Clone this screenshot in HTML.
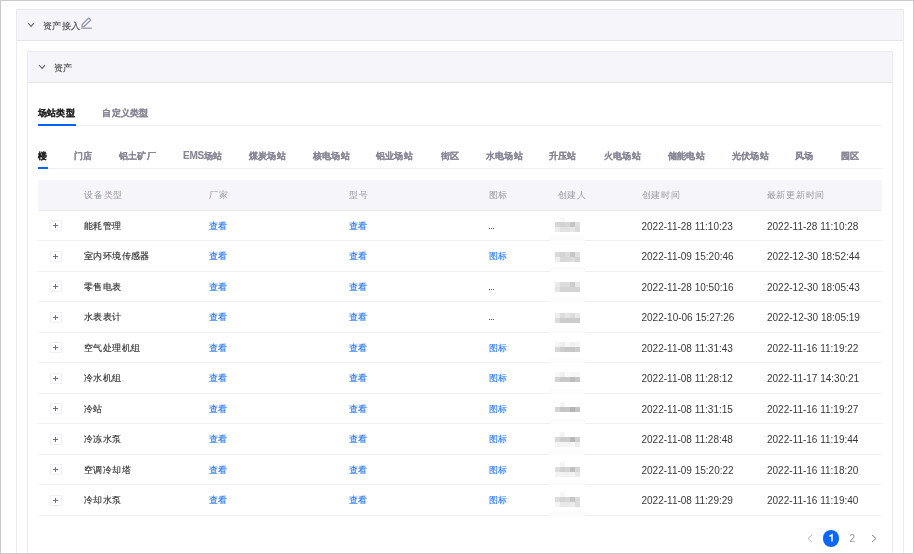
<!DOCTYPE html><html><head><meta charset='utf-8'><style>
*{box-sizing:border-box;margin:0;padding:0}
html,body{width:914px;height:554px;overflow:hidden;background:#fff}
#root{position:absolute;left:0;top:0;width:914px;height:554px;will-change:transform;font-family:"Liberation Sans",sans-serif;font-size:9px;letter-spacing:0.4px;color:#333}
.dt{-webkit-text-stroke:0.15px #333}
.a{position:absolute;white-space:nowrap;line-height:1}
.num{font-size:10px;letter-spacing:0}
.dtm{font-size:10px;letter-spacing:0;color:#383838}
.frame{position:absolute;left:0;top:0;width:914px;height:554px;border:1px solid #cac9cb}
.tt{color:#484848;-webkit-text-stroke:0.1px currentColor}
.tab{font-weight:bold;color:#868696;letter-spacing:0.2px;-webkit-text-stroke:0.1px currentColor}
.link{color:#2274f2;-webkit-text-stroke:0.08px currentColor}
.hd{color:#9a9aa4;letter-spacing:0.75px}
.ln{position:absolute;height:1px}
</style></head><body><div id="root"><div class="a" style="left:16px;top:9px;width:888px;height:560px;border:1px solid #eaeaf0"></div>
<div class="a" style="left:17px;top:10px;width:886px;height:31px;background:#f5f5fa;border-bottom:1px solid #e4e4ec"></div>
<svg class="a" style="left:27px;top:21px" width="9" height="7" viewBox="0 0 9 7"><path d="M1.1 2 L4.1 5.5 L6.9 2.1" fill="none" stroke="#555" stroke-width="1.05"/></svg>
<div class="a tt" style="left:43px;top:22px">资产接入</div>
<svg class="a" style="left:79px;top:15px" width="14" height="15" viewBox="0 0 14 15"><path d="M3 11.8 L3.2 9.6 L9.7 3.1 L11.7 5.1 L5.2 11.6 Z" fill="none" stroke="#9898ae" stroke-width="1.35" stroke-linejoin="round"/><line x1="2.2" y1="13.2" x2="12.8" y2="13.2" stroke="#9898ae" stroke-width="1.3"/></svg>
<div class="a" style="left:27px;top:51px;width:866px;height:560px;border:1px solid #eaeaf0"></div>
<div class="a" style="left:28px;top:52px;width:864px;height:31px;background:#f5f5fa;border-bottom:1px solid #e4e4ec"></div>
<svg class="a" style="left:38px;top:63px" width="9" height="7" viewBox="0 0 9 7"><path d="M1.1 2 L4.1 5.5 L6.9 2.1" fill="none" stroke="#555" stroke-width="1.05"/></svg>
<div class="a tt" style="left:54px;top:64px">资产</div>
<div class="a" style="left:38px;top:125px;width:844px;height:1px;background:#efeff3"></div>
<div class="a" style="left:38px;top:124px;width:37.5px;height:2px;background:#0062fa"></div>
<div class="a tab" style="left:38px;top:109px;color:#1e1e1e">场站类型</div>
<div class="a tab" style="left:102.4px;top:109px">自定义类型</div>
<div class="a" style="left:38px;top:168px;width:844px;height:1px;background:#efeff3"></div>
<div class="a" style="left:38px;top:167px;width:10px;height:2px;background:#0062fa"></div>
<div class="a tab" style="left:38px;top:152px;color:#1e1e1e">楼</div>
<div class="a tab" style="left:74px;top:152px;">门店</div>
<div class="a tab" style="left:119px;top:152px;">铝土矿厂</div>
<div class="a tab" style="left:183px;top:152px;"><span style="font-size:10px;letter-spacing:-0.25px;line-height:0">EMS</span>场站</div>
<div class="a tab" style="left:249px;top:152px;">煤炭场站</div>
<div class="a tab" style="left:313px;top:152px;">核电场站</div>
<div class="a tab" style="left:376px;top:152px;">铝业场站</div>
<div class="a tab" style="left:441px;top:152px;">街区</div>
<div class="a tab" style="left:486px;top:152px;">水电场站</div>
<div class="a tab" style="left:549px;top:152px;">升压站</div>
<div class="a tab" style="left:604px;top:152px;">火电场站</div>
<div class="a tab" style="left:668px;top:152px;">储能电站</div>
<div class="a tab" style="left:732px;top:152px;">光伏场站</div>
<div class="a tab" style="left:795px;top:152px;">风场</div>
<div class="a tab" style="left:841px;top:152px;">园区</div>
<div class="a" style="left:38px;top:180px;width:844px;height:31px;background:#f5f5fa;border-bottom:1px solid #e8e8ee"></div>
<div class="a hd" style="left:84px;top:191px">设备类型</div>
<div class="a hd" style="left:209px;top:191px">厂家</div>
<div class="a hd" style="left:349px;top:191px">型号</div>
<div class="a hd" style="left:488.5px;top:191px">图标</div>
<div class="a hd" style="left:557.5px;top:191px">创建人</div>
<div class="a hd" style="left:641.5px;top:191px">创建时间</div>
<div class="a hd" style="left:766.5px;top:191px">最新更新时间</div>
<div class="a" style="left:38px;top:240.2px;width:844px;height:1px;background:#efeff2"></div>
<div class="a" style="left:50px;top:220.3px;width:12px;height:11px;border:1px solid #f0f0f4"></div>
<div class="a" style="left:53px;top:225.3px;width:5px;height:1px;background:#707070"></div>
<div class="a" style="left:55px;top:223.3px;width:1px;height:5px;background:#707070"></div>
<div class="a dt" style="left:84px;top:221.8px">能耗管理</div>
<div class="a link" style="left:209px;top:221.8px">查看</div>
<div class="a link" style="left:349px;top:221.8px">查看</div>
<div class="a" style="left:488.5px;top:227.5px;width:1.2px;height:1.2px;background:#555"></div>
<div class="a" style="left:490.7px;top:227.5px;width:1.2px;height:1.2px;background:#555"></div>
<div class="a" style="left:492.9px;top:227.5px;width:1.2px;height:1.2px;background:#555"></div>
<div class="a" style="left:555px;top:222px;width:5px;height:5px;background:#d6d6d6"></div>
<div class="a" style="left:560px;top:222px;width:5px;height:5px;background:#d2d2d2"></div>
<div class="a" style="left:565px;top:222px;width:5px;height:5px;background:#d6d6d6"></div>
<div class="a" style="left:570px;top:222px;width:5px;height:5px;background:#c6c6c6"></div>
<div class="a" style="left:575px;top:222px;width:5px;height:5px;background:#dedede"></div>
<div class="a" style="left:555px;top:227px;width:5px;height:5px;background:#ececec"></div>
<div class="a" style="left:560px;top:227px;width:5px;height:5px;background:#e2e2e2"></div>
<div class="a" style="left:565px;top:227px;width:5px;height:5px;background:#e2e2e2"></div>
<div class="a" style="left:570px;top:227px;width:5px;height:5px;background:#e6e6e6"></div>
<div class="a" style="left:575px;top:227px;width:5px;height:5px;background:#dadada"></div>
<div class="a" style="left:560px;top:217px;width:5px;height:5px;background:#f8f8f8"></div>
<div class="a" style="left:550px;top:236.4px;width:35px;height:5px;background:#fcfcfc"></div>
<div class="a dtm" style="left:641.5px;top:221.5px">2022-11-28 11:10:23</div>
<div class="a dtm" style="left:767px;top:221.5px">2022-11-28 11:10:28</div>
<div class="a" style="left:38px;top:270.7px;width:844px;height:1px;background:#efeff2"></div>
<div class="a" style="left:50px;top:250.8px;width:12px;height:11px;border:1px solid #f0f0f4"></div>
<div class="a" style="left:53px;top:255.8px;width:5px;height:1px;background:#707070"></div>
<div class="a" style="left:55px;top:253.8px;width:1px;height:5px;background:#707070"></div>
<div class="a dt" style="left:84px;top:252.3px">室内环境传感器</div>
<div class="a link" style="left:209px;top:252.3px">查看</div>
<div class="a link" style="left:349px;top:252.3px">查看</div>
<div class="a link" style="left:488.5px;top:252.3px">图标</div>
<div class="a" style="left:555px;top:252px;width:5px;height:5px;background:#dadada"></div>
<div class="a" style="left:560px;top:252px;width:5px;height:5px;background:#d4d4d4"></div>
<div class="a" style="left:565px;top:252px;width:5px;height:5px;background:#dcdcdc"></div>
<div class="a" style="left:570px;top:252px;width:5px;height:5px;background:#c8c8c8"></div>
<div class="a" style="left:575px;top:252px;width:5px;height:5px;background:#e0e0e0"></div>
<div class="a" style="left:555px;top:257px;width:5px;height:5px;background:#eeeeee"></div>
<div class="a" style="left:560px;top:257px;width:5px;height:5px;background:#d8d8d8"></div>
<div class="a" style="left:565px;top:257px;width:5px;height:5px;background:#d8d8d8"></div>
<div class="a" style="left:570px;top:257px;width:5px;height:5px;background:#dcdcdc"></div>
<div class="a" style="left:575px;top:257px;width:5px;height:5px;background:#d4d4d4"></div>
<div class="a" style="left:550px;top:266.9px;width:35px;height:5px;background:#fcfcfc"></div>
<div class="a dtm" style="left:641.5px;top:252.0px">2022-11-09 15:20:46</div>
<div class="a dtm" style="left:767px;top:252.0px">2022-12-30 18:52:44</div>
<div class="a" style="left:38px;top:301.2px;width:844px;height:1px;background:#efeff2"></div>
<div class="a" style="left:50px;top:281.3px;width:12px;height:11px;border:1px solid #f0f0f4"></div>
<div class="a" style="left:53px;top:286.3px;width:5px;height:1px;background:#707070"></div>
<div class="a" style="left:55px;top:284.3px;width:1px;height:5px;background:#707070"></div>
<div class="a dt" style="left:84px;top:282.8px">零售电表</div>
<div class="a link" style="left:209px;top:282.8px">查看</div>
<div class="a link" style="left:349px;top:282.8px">查看</div>
<div class="a" style="left:488.5px;top:288.5px;width:1.2px;height:1.2px;background:#555"></div>
<div class="a" style="left:490.7px;top:288.5px;width:1.2px;height:1.2px;background:#555"></div>
<div class="a" style="left:492.9px;top:288.5px;width:1.2px;height:1.2px;background:#555"></div>
<div class="a" style="left:555px;top:282px;width:5px;height:5px;background:#eaeaea"></div>
<div class="a" style="left:560px;top:282px;width:5px;height:5px;background:#dcdcdc"></div>
<div class="a" style="left:565px;top:282px;width:5px;height:5px;background:#dcdcdc"></div>
<div class="a" style="left:570px;top:282px;width:5px;height:5px;background:#cccccc"></div>
<div class="a" style="left:575px;top:282px;width:5px;height:5px;background:#e8e8e8"></div>
<div class="a" style="left:555px;top:287px;width:5px;height:5px;background:#e4e4e4"></div>
<div class="a" style="left:560px;top:287px;width:5px;height:5px;background:#d4d4d4"></div>
<div class="a" style="left:565px;top:287px;width:5px;height:5px;background:#d4d4d4"></div>
<div class="a" style="left:570px;top:287px;width:5px;height:5px;background:#d4d4d4"></div>
<div class="a" style="left:575px;top:287px;width:5px;height:5px;background:#d4d4d4"></div>
<div class="a" style="left:550px;top:297.4px;width:35px;height:5px;background:#fcfcfc"></div>
<div class="a dtm" style="left:641.5px;top:282.5px">2022-11-28 10:50:16</div>
<div class="a dtm" style="left:767px;top:282.5px">2022-12-30 18:05:43</div>
<div class="a" style="left:38px;top:331.7px;width:844px;height:1px;background:#efeff2"></div>
<div class="a" style="left:50px;top:311.8px;width:12px;height:11px;border:1px solid #f0f0f4"></div>
<div class="a" style="left:53px;top:316.8px;width:5px;height:1px;background:#707070"></div>
<div class="a" style="left:55px;top:314.8px;width:1px;height:5px;background:#707070"></div>
<div class="a dt" style="left:84px;top:313.3px">水表表计</div>
<div class="a link" style="left:209px;top:313.3px">查看</div>
<div class="a link" style="left:349px;top:313.3px">查看</div>
<div class="a" style="left:488.5px;top:319.0px;width:1.2px;height:1.2px;background:#555"></div>
<div class="a" style="left:490.7px;top:319.0px;width:1.2px;height:1.2px;background:#555"></div>
<div class="a" style="left:492.9px;top:319.0px;width:1.2px;height:1.2px;background:#555"></div>
<div class="a" style="left:555px;top:313px;width:5px;height:5px;background:#eeeeee"></div>
<div class="a" style="left:560px;top:313px;width:5px;height:5px;background:#dcdcdc"></div>
<div class="a" style="left:565px;top:313px;width:5px;height:5px;background:#e4e4e4"></div>
<div class="a" style="left:570px;top:313px;width:5px;height:5px;background:#dcdcdc"></div>
<div class="a" style="left:575px;top:313px;width:5px;height:5px;background:#e8e8e8"></div>
<div class="a" style="left:555px;top:318px;width:5px;height:5px;background:#dcdcdc"></div>
<div class="a" style="left:560px;top:318px;width:5px;height:5px;background:#cccccc"></div>
<div class="a" style="left:565px;top:318px;width:5px;height:5px;background:#cccccc"></div>
<div class="a" style="left:570px;top:318px;width:5px;height:5px;background:#cccccc"></div>
<div class="a" style="left:575px;top:318px;width:5px;height:5px;background:#cccccc"></div>
<div class="a" style="left:550px;top:327.9px;width:35px;height:5px;background:#fcfcfc"></div>
<div class="a dtm" style="left:641.5px;top:313.0px">2022-10-06 15:27:26</div>
<div class="a dtm" style="left:767px;top:313.0px">2022-12-30 18:05:19</div>
<div class="a" style="left:38px;top:362.2px;width:844px;height:1px;background:#efeff2"></div>
<div class="a" style="left:50px;top:342.3px;width:12px;height:11px;border:1px solid #f0f0f4"></div>
<div class="a" style="left:53px;top:347.3px;width:5px;height:1px;background:#707070"></div>
<div class="a" style="left:55px;top:345.3px;width:1px;height:5px;background:#707070"></div>
<div class="a dt" style="left:84px;top:343.8px">空气处理机组</div>
<div class="a link" style="left:209px;top:343.8px">查看</div>
<div class="a link" style="left:349px;top:343.8px">查看</div>
<div class="a link" style="left:488.5px;top:343.8px">图标</div>
<div class="a" style="left:555px;top:342px;width:5px;height:5px;background:#f4f4f4"></div>
<div class="a" style="left:560px;top:342px;width:5px;height:5px;background:#eeeeee"></div>
<div class="a" style="left:565px;top:342px;width:5px;height:5px;background:#f8f8f8"></div>
<div class="a" style="left:570px;top:342px;width:5px;height:5px;background:#f0f0f0"></div>
<div class="a" style="left:575px;top:342px;width:5px;height:5px;background:#f4f4f4"></div>
<div class="a" style="left:555px;top:347px;width:5px;height:5px;background:#d8d8d8"></div>
<div class="a" style="left:560px;top:347px;width:5px;height:5px;background:#cccccc"></div>
<div class="a" style="left:565px;top:347px;width:5px;height:5px;background:#c8c8c8"></div>
<div class="a" style="left:570px;top:347px;width:5px;height:5px;background:#c6c6c6"></div>
<div class="a" style="left:575px;top:347px;width:5px;height:5px;background:#cccccc"></div>
<div class="a" style="left:550px;top:358.4px;width:35px;height:5px;background:#fcfcfc"></div>
<div class="a dtm" style="left:641.5px;top:343.5px">2022-11-08 11:31:43</div>
<div class="a dtm" style="left:767px;top:343.5px">2022-11-16 11:19:22</div>
<div class="a" style="left:38px;top:392.7px;width:844px;height:1px;background:#efeff2"></div>
<div class="a" style="left:50px;top:372.8px;width:12px;height:11px;border:1px solid #f0f0f4"></div>
<div class="a" style="left:53px;top:377.8px;width:5px;height:1px;background:#707070"></div>
<div class="a" style="left:55px;top:375.8px;width:1px;height:5px;background:#707070"></div>
<div class="a dt" style="left:84px;top:374.3px">冷水机组</div>
<div class="a link" style="left:209px;top:374.3px">查看</div>
<div class="a link" style="left:349px;top:374.3px">查看</div>
<div class="a link" style="left:488.5px;top:374.3px">图标</div>
<div class="a" style="left:555px;top:372px;width:5px;height:5px;background:#f8f8f8"></div>
<div class="a" style="left:560px;top:372px;width:5px;height:5px;background:#f0f0f0"></div>
<div class="a" style="left:565px;top:372px;width:5px;height:5px;background:#fafafa"></div>
<div class="a" style="left:570px;top:372px;width:5px;height:5px;background:#f8f8f8"></div>
<div class="a" style="left:575px;top:372px;width:5px;height:5px;background:#f8f8f8"></div>
<div class="a" style="left:555px;top:377px;width:5px;height:5px;background:#d4d4d4"></div>
<div class="a" style="left:560px;top:377px;width:5px;height:5px;background:#c8c8c8"></div>
<div class="a" style="left:565px;top:377px;width:5px;height:5px;background:#c8c8c8"></div>
<div class="a" style="left:570px;top:377px;width:5px;height:5px;background:#bcbcbc"></div>
<div class="a" style="left:575px;top:377px;width:5px;height:5px;background:#c8c8c8"></div>
<div class="a" style="left:550px;top:388.9px;width:35px;height:5px;background:#fcfcfc"></div>
<div class="a dtm" style="left:641.5px;top:374.0px">2022-11-08 11:28:12</div>
<div class="a dtm" style="left:767px;top:374.0px">2022-11-17 14:30:21</div>
<div class="a" style="left:38px;top:423.2px;width:844px;height:1px;background:#efeff2"></div>
<div class="a" style="left:50px;top:403.3px;width:12px;height:11px;border:1px solid #f0f0f4"></div>
<div class="a" style="left:53px;top:408.3px;width:5px;height:1px;background:#707070"></div>
<div class="a" style="left:55px;top:406.3px;width:1px;height:5px;background:#707070"></div>
<div class="a dt" style="left:84px;top:404.8px">冷站</div>
<div class="a link" style="left:209px;top:404.8px">查看</div>
<div class="a link" style="left:349px;top:404.8px">查看</div>
<div class="a link" style="left:488.5px;top:404.8px">图标</div>
<div class="a" style="left:560px;top:402px;width:5px;height:5px;background:#f4f4f4"></div>
<div class="a" style="left:555px;top:407px;width:5px;height:5px;background:#d4d4d4"></div>
<div class="a" style="left:560px;top:407px;width:5px;height:5px;background:#c4c4c4"></div>
<div class="a" style="left:565px;top:407px;width:5px;height:5px;background:#c6c6c6"></div>
<div class="a" style="left:570px;top:407px;width:5px;height:5px;background:#b4b4b4"></div>
<div class="a" style="left:575px;top:407px;width:5px;height:5px;background:#c4c4c4"></div>
<div class="a" style="left:550px;top:419.4px;width:35px;height:5px;background:#fcfcfc"></div>
<div class="a dtm" style="left:641.5px;top:404.5px">2022-11-08 11:31:15</div>
<div class="a dtm" style="left:767px;top:404.5px">2022-11-16 11:19:27</div>
<div class="a" style="left:38px;top:453.7px;width:844px;height:1px;background:#efeff2"></div>
<div class="a" style="left:50px;top:433.8px;width:12px;height:11px;border:1px solid #f0f0f4"></div>
<div class="a" style="left:53px;top:438.8px;width:5px;height:1px;background:#707070"></div>
<div class="a" style="left:55px;top:436.8px;width:1px;height:5px;background:#707070"></div>
<div class="a dt" style="left:84px;top:435.3px">冷冻水泵</div>
<div class="a link" style="left:209px;top:435.3px">查看</div>
<div class="a link" style="left:349px;top:435.3px">查看</div>
<div class="a link" style="left:488.5px;top:435.3px">图标</div>
<div class="a" style="left:560px;top:432px;width:5px;height:5px;background:#f4f4f4"></div>
<div class="a" style="left:555px;top:437px;width:5px;height:5px;background:#d8d8d8"></div>
<div class="a" style="left:560px;top:437px;width:5px;height:5px;background:#cccccc"></div>
<div class="a" style="left:565px;top:437px;width:5px;height:5px;background:#cccccc"></div>
<div class="a" style="left:570px;top:437px;width:5px;height:5px;background:#b8b8b8"></div>
<div class="a" style="left:575px;top:437px;width:5px;height:5px;background:#d0d0d0"></div>
<div class="a" style="left:555px;top:442px;width:5px;height:5px;background:#f4f4f4"></div>
<div class="a" style="left:560px;top:442px;width:5px;height:5px;background:#f4f4f4"></div>
<div class="a" style="left:565px;top:442px;width:5px;height:5px;background:#f4f4f4"></div>
<div class="a" style="left:570px;top:442px;width:5px;height:5px;background:#f8f8f8"></div>
<div class="a" style="left:575px;top:442px;width:5px;height:5px;background:#eeeeee"></div>
<div class="a" style="left:550px;top:449.9px;width:35px;height:5px;background:#fcfcfc"></div>
<div class="a dtm" style="left:641.5px;top:435.0px">2022-11-08 11:28:48</div>
<div class="a dtm" style="left:767px;top:435.0px">2022-11-16 11:19:44</div>
<div class="a" style="left:38px;top:484.2px;width:844px;height:1px;background:#efeff2"></div>
<div class="a" style="left:50px;top:464.3px;width:12px;height:11px;border:1px solid #f0f0f4"></div>
<div class="a" style="left:53px;top:469.3px;width:5px;height:1px;background:#707070"></div>
<div class="a" style="left:55px;top:467.3px;width:1px;height:5px;background:#707070"></div>
<div class="a dt" style="left:84px;top:465.8px">空调冷却塔</div>
<div class="a link" style="left:209px;top:465.8px">查看</div>
<div class="a link" style="left:349px;top:465.8px">查看</div>
<div class="a link" style="left:488.5px;top:465.8px">图标</div>
<div class="a" style="left:560px;top:462px;width:5px;height:5px;background:#f4f4f4"></div>
<div class="a" style="left:555px;top:467px;width:5px;height:5px;background:#dcdcdc"></div>
<div class="a" style="left:560px;top:467px;width:5px;height:5px;background:#d0d0d0"></div>
<div class="a" style="left:565px;top:467px;width:5px;height:5px;background:#d4d4d4"></div>
<div class="a" style="left:570px;top:467px;width:5px;height:5px;background:#c0c0c0"></div>
<div class="a" style="left:575px;top:467px;width:5px;height:5px;background:#d8d8d8"></div>
<div class="a" style="left:555px;top:472px;width:5px;height:5px;background:#f4f4f4"></div>
<div class="a" style="left:560px;top:472px;width:5px;height:5px;background:#f2f2f2"></div>
<div class="a" style="left:565px;top:472px;width:5px;height:5px;background:#f0f0f0"></div>
<div class="a" style="left:570px;top:472px;width:5px;height:5px;background:#f4f4f4"></div>
<div class="a" style="left:575px;top:472px;width:5px;height:5px;background:#e8e8e8"></div>
<div class="a" style="left:550px;top:480.4px;width:35px;height:5px;background:#fcfcfc"></div>
<div class="a dtm" style="left:641.5px;top:465.5px">2022-11-09 15:20:22</div>
<div class="a dtm" style="left:767px;top:465.5px">2022-11-16 11:18:20</div>
<div class="a" style="left:38px;top:514.7px;width:844px;height:1px;background:#efeff2"></div>
<div class="a" style="left:50px;top:494.8px;width:12px;height:11px;border:1px solid #f0f0f4"></div>
<div class="a" style="left:53px;top:499.8px;width:5px;height:1px;background:#707070"></div>
<div class="a" style="left:55px;top:497.8px;width:1px;height:5px;background:#707070"></div>
<div class="a dt" style="left:84px;top:496.3px">冷却水泵</div>
<div class="a link" style="left:209px;top:496.3px">查看</div>
<div class="a link" style="left:349px;top:496.3px">查看</div>
<div class="a link" style="left:488.5px;top:496.3px">图标</div>
<div class="a" style="left:560px;top:492px;width:5px;height:5px;background:#f6f6f6"></div>
<div class="a" style="left:555px;top:497px;width:5px;height:5px;background:#dcdcdc"></div>
<div class="a" style="left:560px;top:497px;width:5px;height:5px;background:#d4d4d4"></div>
<div class="a" style="left:565px;top:497px;width:5px;height:5px;background:#d8d8d8"></div>
<div class="a" style="left:570px;top:497px;width:5px;height:5px;background:#c8c8c8"></div>
<div class="a" style="left:575px;top:497px;width:5px;height:5px;background:#dcdcdc"></div>
<div class="a" style="left:555px;top:502px;width:5px;height:5px;background:#f4f4f4"></div>
<div class="a" style="left:560px;top:502px;width:5px;height:5px;background:#e8e8e8"></div>
<div class="a" style="left:565px;top:502px;width:5px;height:5px;background:#e8e8e8"></div>
<div class="a" style="left:570px;top:502px;width:5px;height:5px;background:#ececec"></div>
<div class="a" style="left:575px;top:502px;width:5px;height:5px;background:#dcdcdc"></div>
<div class="a" style="left:550px;top:510.9px;width:35px;height:5px;background:#fcfcfc"></div>
<div class="a dtm" style="left:641.5px;top:496.0px">2022-11-08 11:29:29</div>
<div class="a dtm" style="left:767px;top:496.0px">2022-11-16 11:19:40</div>
<svg class="a" style="left:806px;top:534px" width="8" height="9" viewBox="0 0 8 9"><path d="M6 1 L2 4.5 L6 8" fill="none" stroke="#b4b4b4" stroke-width="1"/></svg>
<div class="a" style="left:822.6px;top:530.4px;width:16.6px;height:16.6px;border-radius:50%;background:#0a66f5"></div><svg class="a" style="left:822px;top:530px" width="18" height="18" viewBox="822 530 18 18"><path d="M829.4 536.4 L832 534.9 L832 541.6" fill="none" stroke="#fff" stroke-width="1.5" stroke-linejoin="miter"/></svg>
<div class="a num" style="left:849.5px;top:534px;color:#959595">2</div>
<svg class="a" style="left:870px;top:534px" width="8" height="9" viewBox="0 0 8 9"><path d="M2 1 L6 4.5 L2 8" fill="none" stroke="#808080" stroke-width="1"/></svg>
<div class="frame"></div></div></body></html>
